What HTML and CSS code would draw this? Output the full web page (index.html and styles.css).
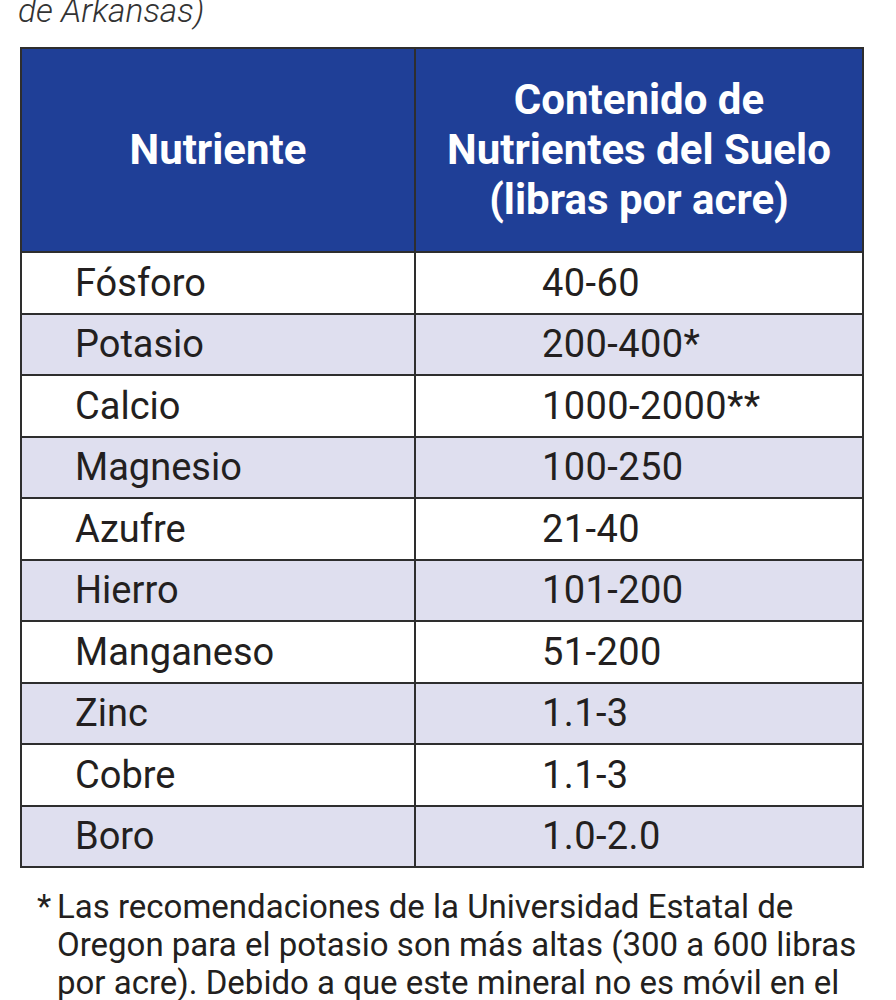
FILE: index.html
```html
<!DOCTYPE html>
<html lang="es">
<head>
<meta charset="utf-8">
<title>Contenido de Nutrientes del Suelo</title>
<link rel="stylesheet" href="styles.css">
</head>
<body>
<p class="caption">de Arkansas)</p>
<table class="nutrients">
  <thead>
    <tr>
      <th class="col-name">Nutriente</th>
      <th class="col-value">Contenido de<br>Nutrientes del Suelo<br>(libras por acre)</th>
    </tr>
  </thead>
  <tbody>
    <tr><td class="name">Fósforo</td><td class="value">40-60</td></tr>
    <tr class="alt"><td class="name">Potasio</td><td class="value">200-400*</td></tr>
    <tr><td class="name">Calcio</td><td class="value">1000-2000**</td></tr>
    <tr class="alt"><td class="name">Magnesio</td><td class="value">100-250</td></tr>
    <tr><td class="name">Azufre</td><td class="value">21-40</td></tr>
    <tr class="alt"><td class="name">Hierro</td><td class="value">101-200</td></tr>
    <tr><td class="name">Manganeso</td><td class="value">51-200</td></tr>
    <tr class="alt"><td class="name">Zinc</td><td class="value">1.1-3</td></tr>
    <tr><td class="name">Cobre</td><td class="value">1.1-3</td></tr>
    <tr class="alt"><td class="name">Boro</td><td class="value">1.0-2.0</td></tr>
  </tbody>
</table>
<div class="footnote">
  <span class="mark">*</span>
  <p class="note-text">Las recomendaciones de la Universidad Estatal de Oregon para el potasio son más altas (300 a 600 libras por acre). Debido a que este mineral no es móvil en el suelo</p>
</div>
</body>
</html>
```

FILE: styles.css
```css
html, body {
  margin: 0;
  padding: 0;
  background: #ffffff;
}

body {
  width: 896px;
  height: 1000px;
  overflow: hidden;
  font-family: Roboto, "Liberation Sans", sans-serif;
  color: #231f20;
}

.caption {
  margin: -9px 0 0 18px;
  height: 56px;
  font-size: 33.5px;
  line-height: 40px;
  font-style: italic;
  font-weight: 300;
  color: #333333;
}

.nutrients {
  margin-left: 20px;
  width: 844px;
  border-collapse: collapse;
  border: 2px solid #2e2e2e;
  table-layout: fixed;
}

.nutrients th,
.nutrients td {
  border: 2px solid #2e2e2e;
  padding: 0;
}

.nutrients th {
  background: #1f3f97;
  color: #ffffff;
  font-weight: 700;
  font-size: 42px;
  line-height: 50px;
  height: 202px;
  text-align: center;
  vertical-align: middle;
}

.col-name {
  width: 392px;
}

.nutrients td {
  height: 59.5px;
  font-size: 38px;
  line-height: 44px;
  vertical-align: middle;
}

.nutrients td.value {
  letter-spacing: 0.4px;
}

.nutrients tr.alt td {
  background: #dfdfef;
}

.name {
  padding-left: 53px !important;
}

.value {
  padding-left: 126px !important;
}

.footnote {
  display: flex;
  margin: 20px 0 0 37px;
  font-size: 33px;
  line-height: 38px;
  color: #231f20;
}

.mark {
  width: 20px;
  flex: none;
}

.note-text {
  margin: 0;
  width: 815px;
}
```
